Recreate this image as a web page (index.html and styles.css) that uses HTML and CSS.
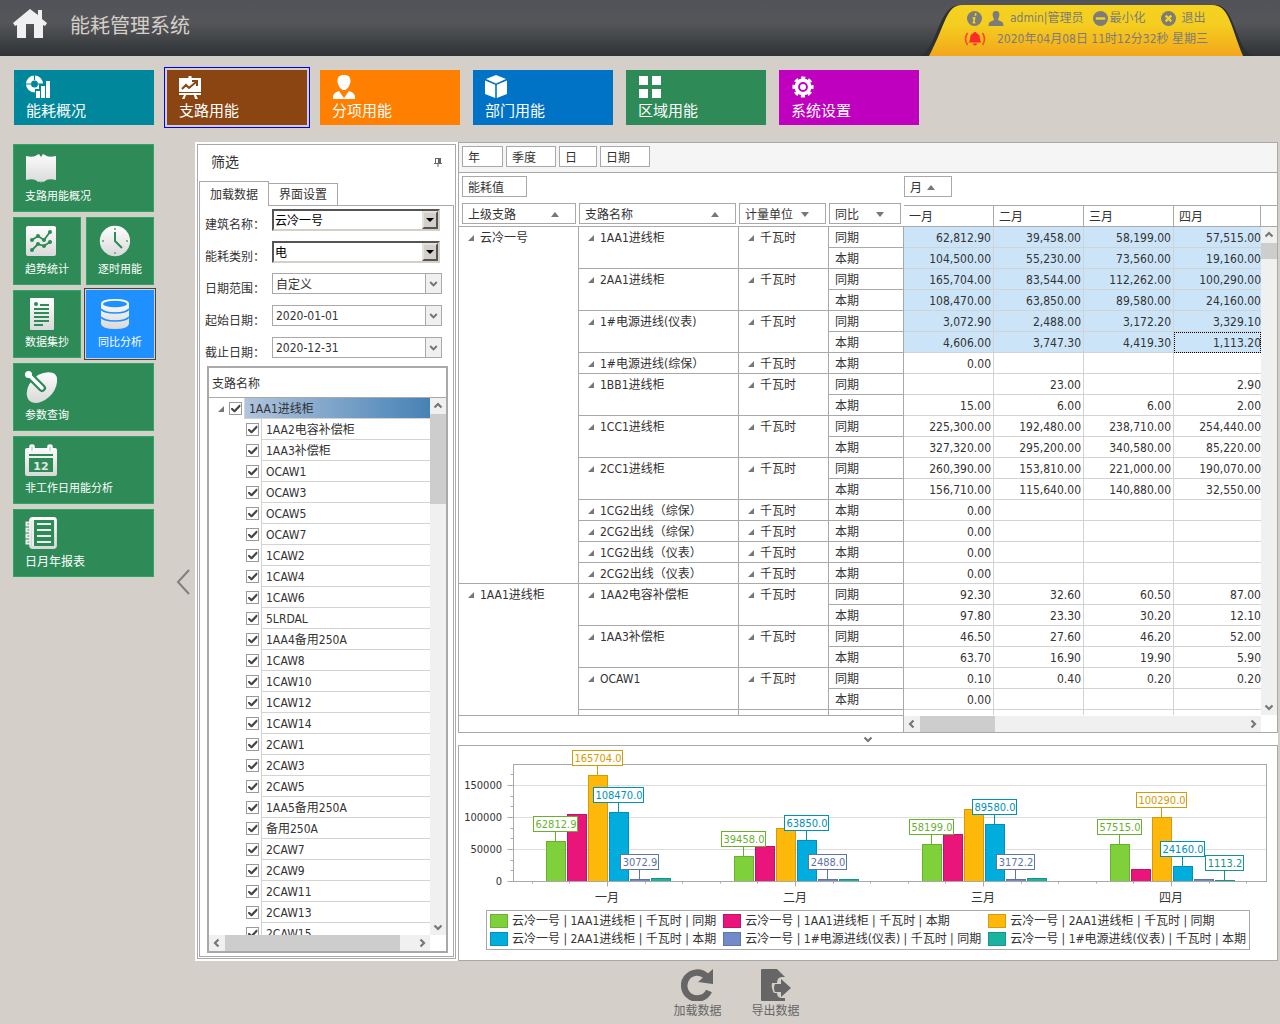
FILE: index.html
```html
<!DOCTYPE html>
<html lang="zh-CN">
<head>
  <meta charset="UTF-8">
  <title>能耗管理系统</title>
  <link rel="stylesheet" href="styles.css">
</head>
<body>
  <svg class="defs" width="0" height="0">
    <defs>
      <linearGradient id="metal" gradientUnits="userSpaceOnUse" x1="0" y1="0" x2="0" y2="32">
        <stop offset="0" stop-color="#ffffff"/>
        <stop offset="1" stop-color="#d8d8d8"/>
      </linearGradient>
      <linearGradient id="gold" x1="0" y1="0" x2="0" y2="1">
        <stop offset="0" stop-color="#f4d31f"/>
        <stop offset="0.4" stop-color="#f4cd20"/>
        <stop offset="1" stop-color="#f3a61b"/>
      </linearGradient>
      <symbol id="chev" viewBox="0 0 16 16">
        <path d="M4.5 6.5 8 10l3.500-3.500" fill="none" stroke="#777" stroke-width="2.200"/>
      </symbol>
    </defs>
  </svg>

  <header class="topbar">
    <svg class="home" width="36" height="32" viewBox="0 0 36 32">
      <path d="M18 1 1 15l2 3 2-1v13h9V16h8v14h9V17l2 1 2-3-5-4V2h-4v5z" fill="#f0f0f0"/>
    </svg>
    <h1>能耗管理系统</h1>
    <div class="user-tab">
      <svg class="tab-shape" width="348" height="56" viewBox="0 0 348 56">
        <path d="M8 56C26 48 26 5 48 5h256c20 0 20 51 40 51z" fill="#2c3032"/>
        <path d="M17 56C34 24 34 5 50 5h250C317 5 318 24 331 56z" fill="url(#gold)"/>
      </svg>
      <div class="user-row">
        <svg width="15" height="15" viewBox="0 0 16 16"><circle cx="8" cy="8" r="8" fill="#7d7c78"/><path d="M9.500 2.500 8.800 5M8.300 6.500 7 12.500M6 7.500h2M6 12.500h3" stroke="#f4d31f" stroke-width="1.800"/></svg>
        <svg width="16" height="15" viewBox="0 0 16 16"><path d="M8 0c3 0 4 2 3.500 5-.3 2-1.300 3-1.300 4.500L15 12q1 1 1 4H0q0-3 1-4l4.800-2.500C5.800 8 4.800 7 4.500 5 4 2 5 0 8 0z" fill="#7d7c78"/></svg>
        <span class="user-name">admin|管理员</span>
        <button type="button"><svg width="15" height="15" viewBox="0 0 16 16"><circle cx="8" cy="8" r="8" fill="#7d7c78"/><path d="M3 8h10" stroke="#f4d31f" stroke-width="2.500"/></svg>最小化</button>
        <button type="button" class="exit"><svg width="15" height="15" viewBox="0 0 16 16"><circle cx="8" cy="8" r="8" fill="#7d7c78"/><path d="m5 5 6 6M11 5l-6 6" stroke="#f4d31f" stroke-width="2.500"/></svg>退出</button>
      </div>
      <div class="clock-row">
        <svg width="24" height="16" viewBox="0 0 24 16"><path d="M12 1q1.500 0 1.500 1.200Q17 3 17 8q0 2 1.500 3.500h-13Q7 10 7 8q0-5 3.500-5.800Q10.500 1 12 1zM10 12.500h4q0 2-2 2t-2-2z" fill="#fb2b2b"/><path d="M4.500 2q-4 6 0 12M19.500 2q4 6 0 12" fill="none" stroke="#fb4a2b" stroke-width="1.600"/></svg>
        <span>2020年04月08日 11时12分32秒 星期三</span>
      </div>
    </div>
  </header>

  <nav class="modules">
    <a href="#" class="module teal">
      <svg width="24" height="24" viewBox="0 0 24 24"><circle cx="8.500" cy="9" r="6" fill="none" stroke="#fff" stroke-width="5"/><path d="M8.500 0v5M0 9h5M12 9h5" stroke="#00879c" stroke-width="1.200"/><path d="M9 14h15v10H9z" fill="#00879c"/><path d="M18 4h7v20h-7zM13 9h6v15h-6z" fill="#00879c"/><path d="M10 16h4v7h-4zM15 11h4v12h-4zM20 6h4v17h-4z" fill="#fff"/></svg>
      <span>能耗概况</span>
    </a>
    <a href="#" class="module brown current">
      <svg width="24" height="24" viewBox="0 0 24 24"><path d="M9.500 1h3v2H22v14H0V3h9.500zM0 18h22v2h-5l2 4h-3l-1-4H7l-1.500 4H3l2-4H0z" fill="#fff"/><path d="m3 14 4-4 3 3 7-6M13 6h5v5" fill="none" stroke="#8b4513" stroke-width="2"/></svg>
      <span>支路用能</span>
    </a>
    <a href="#" class="module orange">
      <svg width="24" height="24" viewBox="0 0 24 24"><path d="M12 0c4.500 0 6.500 2 6.500 6 0 3-2 7-4.500 8.500q-2 1-4 0C7.500 13 5.500 9 5.500 6c0-4 2-6 6.500-6zM7 16l5 7 5-7q7 2 6 8H1q-1-6 6-8z" fill="#fff"/></svg>
      <span>分项用能</span>
    </a>
    <a href="#" class="module blue">
      <svg width="24" height="24" viewBox="0 0 24 24"><path d="M11 0 21 4 11 8.500 1 4zM0 5.500l10.200 4.300V23L0 19zM22 5.500 11.800 9.800V23L22 19z" fill="#fff"/></svg>
      <span>部门用能</span>
    </a>
    <a href="#" class="module green">
      <svg width="24" height="24" viewBox="0 0 24 24"><path d="M1 1h9v9H1zM14 1h9v9h-9zM1 14h9v9H1zM14 14h9v9h-9z" fill="#fff"/></svg>
      <span>区域用能</span>
    </a>
    <a href="#" class="module purple">
      <svg width="24" height="24" viewBox="0 0 24 24"><circle cx="12" cy="12" r="8.800" fill="none" stroke="#fff" stroke-width="3.600" stroke-dasharray="3.910 3" stroke-dashoffset="2"/><circle cx="12" cy="12" r="6.700" fill="none" stroke="#fff" stroke-width="3.600"/><circle cx="12" cy="12" r="3" fill="#fff"/></svg>
      <span>系统设置</span>
    </a>
  </nav>

  <div class="main">
    <nav class="side">
      <a href="#" class="tile wide">
        <svg width="32" height="32" viewBox="0 0 32 32"><path d="M1 4q8 2 11-1l2-1 2 3 2-3 2 1q3 3 11 1v24q-8-2-11 1-2 2-3 0l-1 2-1-2q-1 2-3 0-3-3-11-1z" fill="url(#metal)"/></svg>
        <span>支路用能概况</span>
      </a>
      <a href="#" class="tile">
        <svg width="32" height="32" viewBox="0 0 32 32"><rect x="1" y="1" width="30" height="30" rx="2" fill="url(#metal)"/><path d="m7 15 6-4 6 4 6-8M7 25l6-6 6 2 6-4" fill="none" stroke="#2e8b57" stroke-width="1.800"/><g fill="#2e8b57"><circle cx="7" cy="15" r="2"/><circle cx="13" cy="11" r="2"/><circle cx="19" cy="15" r="2"/><circle cx="25" cy="7" r="2"/><circle cx="7" cy="25" r="2"/><circle cx="13" cy="19" r="2"/><circle cx="19" cy="21" r="2"/><circle cx="25" cy="17" r="2"/></g></svg>
        <span>趋势统计</span>
      </a>
      <a href="#" class="tile">
        <svg width="32" height="32" viewBox="0 0 32 32"><circle cx="17" cy="16" r="15.200" fill="url(#metal)"/><path d="M17 7v9l7 7" fill="none" stroke="#2e8b57" stroke-width="2"/><path d="M16 3h2v2h-2zM16 27h2v2h-2zM4 15h2v2H4zM28 15h2v2h-2z" fill="#7cb596"/></svg>
        <span>逐时用能</span>
      </a>
      <a href="#" class="tile">
        <svg width="32" height="32" viewBox="0 0 32 32"><path d="M6 0h22q1 0 1 1v30q0 1-1 1H6q-1 0-1-1V1q0-1 1-1z" fill="url(#metal)"/><circle cx="11" cy="6" r="2" fill="#2e8b57"/><path d="M15 7h9M9 11h15M9 15h15M9 19h15M9 23h15M9 27h9" stroke="#2e8b57" stroke-width="1.800"/></svg>
        <span>数据集抄</span>
      </a>
      <a href="#" class="tile selected">
        <svg width="32" height="32" viewBox="0 0 32 32"><path d="M3 6v20q1 5 14 5t14-5V6q0-5-14-5T3 6z" fill="url(#metal)"/><ellipse cx="17" cy="6" rx="12" ry="3.200" fill="#1e90ff"/><path d="M3 11q3 4 14 4t14-4M3 19q3 4 14 4t14-4" fill="none" stroke="#1e90ff" stroke-width="1.500"/></svg>
        <span>同比分析</span>
      </a>
      <a href="#" class="tile wide">
        <svg width="32" height="32" viewBox="0 0 32 32"><path d="M13 4q8-4 15-2 5 2 4 9-1 9-8 15-7 6-14 6-7-1-8-7-2-11 11-21z" fill="url(#metal)"/><path d="m4 4 13 13" stroke="#2e8b57" stroke-width="8" stroke-linecap="round"/><path d="m4 4 13 13" stroke="#fff" stroke-width="3.500" stroke-linecap="round"/><circle cx="3.500" cy="3.500" r="3.500" fill="#fff"/></svg>
        <span>参数查询</span>
      </a>
      <a href="#" class="tile wide">
        <svg width="32" height="32" viewBox="0 0 32 32"><path d="M2 4h28q2 0 2 2v24q0 2-2 2H2q-2 0-2-2V6q0-2 2-2z" fill="url(#metal)"/><path d="M4 10h24v2H4zM4 14h24v14H4z" fill="#2e8b57"/><path d="M5.500 7V2.500q0-1 1.500-1t1.500 1V7M23.500 7V2.500q0-1 1.500-1t1.500 1V7" stroke="#fff" stroke-width="2.500" fill="#2e8b57"/><text x="16" y="26" text-anchor="middle" class="cal-day">12</text></svg>
        <span>非工作日用能分析</span>
      </a>
      <a href="#" class="tile wide">
        <svg width="32" height="32" viewBox="0 0 32 32"><rect x="5.500" y="1.500" width="25" height="29" rx="2" fill="none" stroke="url(#metal)" stroke-width="2.800"/><path d="M8 3v26" stroke="#eee" stroke-width="2"/><path d="M12 7h14M12 13h14M12 19h14M12 25h14" stroke="#eee" stroke-width="2"/><path d="M6 5.500H1.500v3H6M6 11.500H1.500v3H6M6 17.500H1.500v3H6M6 23.500H1.500v3H6" fill="none" stroke="#eee" stroke-width="2"/></svg>
        <span class="big">日月年报表</span>
      </a>
    </nav>
    <button type="button" class="collapse" aria-label="收起">
      <svg width="14" height="26" viewBox="0 0 14 26"><path d="M13 1 2 13l11 12" fill="none" stroke="#808080" stroke-width="2"/></svg>
    </button>

    <div class="workspace">
      <section class="filter">
        <div class="filter-head">
          <h2>筛选</h2>
          <svg width="8" height="9" viewBox="0 0 8 9"><path d="M1 0h6v5h1v1H4.500v3h-1V6H0V5h1z" fill="#666"/><path d="M2 1h2v4H2z" fill="#fff"/></svg>
        </div>
        <div class="tabs">
          <button type="button" class="tab active">加载数据</button>
          <button type="button" class="tab">界面设置</button>
        </div>
        <div class="tab-page">
          <form class="fields">
            <label for="building">建筑名称：</label>
            <div class="combo classic"><select id="building"><option>云冷一号</option></select></div>
            <label for="kind">能耗类别：</label>
            <div class="combo classic"><select id="kind"><option>电</option></select></div>
            <label for="range">日期范围：</label>
            <div class="combo"><select id="range"><option>自定义</option></select><svg class="arrow"><use href="#chev"/></svg></div>
            <label for="from">起始日期：</label>
            <div class="combo"><input id="from" type="text" value="2020-01-01"><svg class="arrow"><use href="#chev"/></svg></div>
            <label for="to">截止日期：</label>
            <div class="combo"><input id="to" type="text" value="2020-12-31"><svg class="arrow"><use href="#chev"/></svg></div>
          </form>
          <div class="tree">
            <div class="tree-head">支路名称</div>
            <div class="tree-view">
              <ul id="tree" class="tree-list"></ul>
              <div class="scroll-v">
                <svg class="up"><use href="#chev"/></svg>
                <div class="thumb tall"></div>
                <svg class="down"><use href="#chev"/></svg>
              </div>
            </div>
            <div class="tree-bottom">
              <div class="scroll-h">
                <svg class="left"><use href="#chev"/></svg>
                <div class="thumb long"></div>
                <svg class="right"><use href="#chev"/></svg>
              </div>
            </div>
          </div>
        </div>
      </section>

      <div class="content">
        <section class="pivot">
          <div class="pivot-filter">
            <button type="button" class="chip">年</button>
            <button type="button" class="chip w50">季度</button>
            <button type="button" class="chip w38">日</button>
            <button type="button" class="chip w50">日期</button>
          </div>
          <div class="pivot-view">
            <div class="pivot-clip">
              <table class="grid">
                <colgroup>
                  <col class="c-parent"><col class="c-name"><col class="c-unit"><col class="c-kind">
                  <col class="c-num"><col class="c-num"><col class="c-num"><col>
                </colgroup>
                <thead>
                  <tr class="areas">
                    <td colspan="4"><button type="button" class="chip w65">能耗值</button></td>
                    <td colspan="4" class="col-area"><button type="button" class="chip w48">月<i class="asc"></i></button></td>
                  </tr>
                  <tr class="heads">
                    <th><button type="button" class="chip fill">上级支路<i class="asc"></i></button></th>
                    <th><button type="button" class="chip fill">支路名称<i class="asc"></i></button></th>
                    <th><button type="button" class="chip fill">计量单位<i class="desc"></i></button></th>
                    <th><button type="button" class="chip fill">同比<i class="desc"></i></button></th>
                    <th class="month"><div>一月</div></th>
                    <th class="month"><div>二月</div></th>
                    <th class="month"><div>三月</div></th>
                    <th class="month"><div>四月</div></th>
                  </tr>
                </thead>
                <tbody id="rows"></tbody>
              </table>
            </div>
            <div class="pivot-side">
              <div class="side-head"><div></div></div>
              <div class="scroll-v">
                <svg class="up"><use href="#chev"/></svg>
                <div class="thumb"></div>
                <svg class="down"><use href="#chev"/></svg>
              </div>
            </div>
          </div>
          <div class="pivot-bottom">
            <div class="pivot-corner"></div>
            <div class="scroll-h">
              <svg class="left"><use href="#chev"/></svg>
              <div class="thumb"></div>
              <svg class="right"><use href="#chev"/></svg>
            </div>
          </div>
        </section>
        <div class="splitter"><svg width="16" height="12"><use href="#chev" y="-2" width="16" height="16"/></svg></div>
        <section class="chart-box">
          <svg id="chart" class="chart"></svg>
          <ul id="legend" class="legend"></ul>
        </section>
      </div>
    </div>
  </div>

  <footer class="actions">
    <button type="button">
      <svg width="32" height="32" viewBox="0 0 32 32"><path d="M28 22A13 13 0 1 1 25 7" fill="none" stroke="#666" stroke-width="6.500"/><path d="M32 0v15l-15-2z" fill="#666"/></svg>
      加载数据
    </button>
    <button type="button">
      <svg width="32" height="32" viewBox="0 0 32 32"><path d="M2 0h15l8 8v24H2q-1 0-1-1V1q0-1 1-1z" fill="#666"/><path d="M12 14h5q0-6 5-6h3l7 11-7 10h-3q-5 0-5-5h-3q-3-5-2-10z" fill="#d4cfc8"/><path d="M15 15h6v-5l10 9-10 9v-5h-6q-2-4 0-8z" fill="#666"/></svg>
      导出数据
    </button>
  </footer>

  <script src="script.js"></script>
</body>
</html>
```

FILE: styles.css
```css
*, *::before, *::after {
  box-sizing: border-box;
}

body {
  margin: 0;
  height: 100vh;
  display: flex;
  flex-direction: column;
  background: #d4cfc8;
  color: #333;
  font-family: "DejaVu Sans Condensed", "Noto Sans CJK SC", sans-serif;
  font-size: 12px;
  line-height: 20px;
}

h1, h2, ul {
  margin: 0;
  padding: 0;
  font-weight: normal;
  list-style: none;
}

button, input, select {
  font: inherit;
  color: inherit;
}

button {
  padding: 0;
  border: 0;
  background: none;
}

a {
  color: inherit;
  text-decoration: none;
}

svg {
  display: block;
  flex: none;
}

.defs {
  position: absolute;
}

/* Top bar */
.topbar {
  height: 56px;
  flex: none;
  display: flex;
  padding-left: 12px;
  background: linear-gradient(#525358, #55565a 40%, #2f3335);
}

.home {
  margin-top: 8px;
}

.topbar h1 {
  margin-left: 22px;
  font-size: 20px;
  line-height: 52px;
  color: #d4cfc8;
}

.user-tab {
  position: relative;
  width: 348px;
  margin-left: auto;
  margin-right: 20px;
  padding: 8px 0 0 55px;
  color: #7d7c78;
}

.tab-shape {
  position: absolute;
  left: 0;
  top: 0;
}

.user-row, .clock-row {
  position: relative;
  display: flex;
  align-items: center;
  gap: 6px;
  white-space: nowrap;
}

.user-row button {
  display: flex;
  align-items: center;
  gap: 1px;
  margin-left: 4px;
}

.user-row .exit {
  margin-left: 9px;
  gap: 6px;
}

.clock-row {
  margin-left: -4px;
  padding-top: 1px;
  gap: 10px;
}

/* Module tiles */
.modules {
  flex: none;
  display: flex;
  gap: 13px;
  padding: 14px 14px 17px;
}

.module {
  width: 140px;
  height: 55px;
  padding: 5px 12px 0;
  color: #fff;
  font-size: 15px;
}

.module span {
  display: block;
  line-height: 24px;
}

.teal { background: #00879c; }
.brown { background: #8b4513; }
.orange { background: #ff8000; }
.blue { background: #0073c6; }
.green { background: #2e8b57; }
.purple { background: #bf00bf; }

.module.current {
  outline: 1px solid #0000ff;
  outline-offset: 2px;
}

.main {
  flex: 1;
  min-height: 0;
  display: flex;
}

/* Side tiles */
.side {
  flex: none;
  display: grid;
  grid-template-columns: 68px 68px;
  grid-auto-rows: 68px;
  gap: 5px;
  padding: 2px 0 0 13px;
}

.tile {
  padding: 7px 0 0 11px;
  border: 1px solid #2ca764;
  background: #2e8b57;
  color: #fff;
  font-size: 11px;
  white-space: nowrap;
}

.tile span {
  display: block;
  margin-top: 3px;
}

.tile .big {
  font-size: 12px;
}

.tile.wide {
  grid-column: span 2;
}

.tile.selected {
  background: #1e90ff;
  border-color: #1e90ff;
  outline: 1px solid #444;
  outline-offset: 1px;
}

.cal-day {
  font: bold 11px "DejaVu Sans", sans-serif;
  fill: #e6e6e6;
}

.collapse {
  width: 41px;
  padding: 60px 0 0 22px;
}

/* Workspace */
.workspace {
  flex: 1;
  min-width: 0;
  display: flex;
  gap: 2px;
  padding-left: 2px;
  margin-right: 2px;
  background: #fff;
}

.filter {
  width: 259px;
  margin: 2px 0;
  padding: 1px;
  border: 1px solid #a9a9a9;
  display: flex;
  flex-direction: column;
}

.filter-head {
  display: flex;
  align-items: center;
  justify-content: space-between;
  height: 35px;
  padding: 0 12px 3px;
}

.filter-head h2 {
  font-size: 14px;
}

.tabs {
  display: flex;
  align-items: flex-end;
}

.tab {
  height: 22px;
  padding: 1px 10px 0;
  border: 1px solid #a9a9a9;
  border-width: 1px 1px 0 0;
}

.tab.active {
  position: relative;
  height: 25px;
  margin-bottom: -1px;
  border-left-width: 1px;
  background: #fff;
}

.tab-page {
  flex: 1;
  min-height: 0;
  display: flex;
  flex-direction: column;
  padding: 3px 5px 3px 7px;
  border: 1px solid #a9a9a9;
}

.fields {
  display: grid;
  grid-template-columns: 65px 170px;
  row-gap: 10px;
  padding-bottom: 7px;
}

.fields label {
  height: 22px;
  padding-top: 6px;
  margin-left: -2px;
  white-space: nowrap;
}

.combo {
  position: relative;
  height: 21px;
  border: 1px solid #a9a9a9;
  display: flex;
}

.combo select, .combo input {
  flex: 1;
  min-width: 0;
  padding: 1px 3px 0;
  border: 0;
  outline: 0;
  background: #fff;
  appearance: none;
}

.arrow {
  width: 16px;
  height: 19px;
  border-left: 1px solid #a9a9a9;
  background: #f0f0f0;
}

.combo.classic {
  margin-right: 2px;
  height: 22px;
  border: 2px solid;
  border-color: #555 #d4cfc8 #d4cfc8 #555;
  color: #000;
}

.classic select {
  padding: 0 1px;
}

.classic::before {
  content: "";
  position: absolute;
  right: 0;
  top: 0;
  width: 16px;
  height: 18px;
  border: 2px solid;
  border-color: #e4e0da #555 #555 #e4e0da;
  background: #d4cfc8;
  pointer-events: none;
}

.classic::after {
  content: "";
  position: absolute;
  right: 4px;
  top: 7px;
  border: 4px solid transparent;
  border-top-color: #000;
  border-bottom: 0;
  pointer-events: none;
}

/* Circuit tree */
.tree {
  flex: 1;
  min-height: 0;
  display: flex;
  flex-direction: column;
  border: 2px solid #a9a9a9;
}

.tree-head {
  height: 30px;
  padding-left: 3px;
  border-bottom: 1px solid #a9a9a9;
  line-height: 32px;
}

.tree-view {
  flex: 1;
  min-height: 0;
  display: flex;
}

.tree-list {
  flex: 1;
  overflow: hidden;
}

.tree-list li {
  display: flex;
  align-items: center;
  height: 21px;
  padding-left: 37px;
}

.tree-list li.root {
  padding-left: 7px;
}

.tree-list label {
  flex: 1;
  height: 21px;
  margin-left: 2px;
  padding-left: 4px;
  border-left: 1px solid #d3d3d3;
  border-bottom: 1px solid #d3d3d3;
  line-height: 22px;
}

.tree-list .root label {
  background: linear-gradient(to right, #b0c4de, #4682b4);
}

.tree-list input {
  appearance: none;
  width: 13px;
  height: 13px;
  margin: 0;
  border: 1px solid #999;
  background: #fff;
}

.tree-list .root input {
  margin-left: 5px;
}

.tree-list input:checked::before {
  content: "";
  display: block;
  width: 11px;
  height: 11px;
  background: #444;
  clip-path: polygon(10% 46%, 24% 46%, 40% 62%, 84% 16%, 94% 16%, 94% 34%, 46% 84%, 36% 84%, 10% 60%);
}

.tree-bottom {
  height: 16px;
  padding-right: 16px;
}

/* Scroll bars */
.scroll-v, .scroll-h {
  display: flex;
  background: #f0f0f0;
}

.scroll-v {
  width: 16px;
  flex-direction: column;
}

.scroll-h {
  flex: 1;
  height: 16px;
}

.scroll-v svg, .scroll-h svg {
  width: 16px;
  height: 16px;
}

.thumb {
  width: 16px;
  height: 16px;
  background: #cdcdcd;
}

.scroll-h .thumb {
  width: 75px;
}

.scroll-v .tall {
  height: 90px;
}

.scroll-h .long {
  width: 175px;
}

.up { transform: rotate(180deg); }
.left { transform: rotate(90deg); }
.right { transform: rotate(-90deg); margin-left: auto; }
.down { margin-top: auto; }

/* Pivot grid */
.content {
  flex: 1;
  min-width: 0;
  display: flex;
  flex-direction: column;
}

.pivot {
  flex: 1;
  min-height: 0;
  display: flex;
  flex-direction: column;
  border: 1px solid #a9a9a9;
}

.pivot-filter {
  flex: none;
  display: flex;
  gap: 3px;
  height: 30px;
  padding: 3px;
  border-bottom: 1px solid #a9a9a9;
  background: #f5f5f5;
}

.chip {
  display: flex;
  align-items: center;
  justify-content: space-between;
  width: 41px;
  height: 21px;
  padding: 2px 16px 0 5px;
  border: 1px solid #a9a9a9;
  background: #fff;
  white-space: nowrap;
}

.w38 { width: 38px; }
.w48 { width: 48px; }
.w50 { width: 50px; }
.w65 { width: 65px; }
.chip.fill { width: 100%; }

.asc, .desc {
  border: 4px solid transparent;
}

.asc {
  border-top: 0;
  border-bottom: 5px solid #777;
}

.desc {
  border-bottom: 0;
  border-top: 5px solid #777;
}

.pivot-view {
  flex: 1;
  min-height: 0;
  display: flex;
}

.pivot-clip {
  flex: 1;
  min-width: 0;
  overflow: hidden;
}

.grid {
  width: 100%;
  table-layout: fixed;
  border-collapse: separate;
  border-spacing: 0;
}

.c-parent { width: 120px; }
.c-name { width: 160px; }
.c-unit { width: 90px; }
.c-kind { width: 75px; }
.c-num { width: 90px; }

.grid th, .grid td {
  padding: 0;
  font-weight: normal;
  text-align: left;
  vertical-align: top;
}

.grid .areas td {
  height: 30px;
  padding: 3px 3px 0;
}

.grid .areas .col-area {
  padding-left: 0;
}

.grid .heads th {
  height: 24px;
  padding: 0 3px 0 0;
  border-bottom: 1px solid #a9a9a9;
}

.grid .heads th:first-child {
  padding-left: 3px;
}

.grid .heads .month {
  padding: 2px 0 0;
}

.month div {
  height: 21px;
  padding-left: 5px;
  border: 1px solid #a9a9a9;
  border-width: 1px 1px 0 0;
  line-height: 23px;
}

.grid .head, .grid .kind {
  height: 21px;
  padding: 2px 0 0 21px;
  border-right: 1px solid #a9a9a9;
  border-bottom: 1px solid #a9a9a9;
  line-height: 18px;
}

.grid .kind {
  padding-left: 6px;
}

.expand {
  float: left;
  margin: 6px 6px 0 -12px;
  border-left: 6px solid transparent;
  border-bottom: 6px solid #777;
}

.root .expand {
  margin: 0 0 0 2px;
}

.grid .num {
  height: 21px;
  padding: 2px 2px 0 0;
  border-right: 1px solid #d3d3d3;
  border-bottom: 1px solid #d3d3d3;
  line-height: 18px;
  text-align: right;
}

.grid .num:last-child {
  padding-right: 0;
  border-right: 0;
}

.grid .picked {
  background: #cce4f7;
}

.grid .focused {
  outline: 1px dotted #000;
  outline-offset: -1px;
}

.pivot-side {
  display: flex;
  flex-direction: column;
}

.pivot-side .scroll-v {
  flex: 1;
}

.side-head {
  height: 54px;
  padding-top: 32px;
  border-bottom: 1px solid #a9a9a9;
}

.side-head div {
  border-top: 1px solid #a9a9a9;
}

.pivot-bottom {
  height: 17px;
  display: flex;
  align-items: flex-end;
  padding-right: 16px;
}

.pivot-corner {
  width: 445px;
  height: 17px;
  border: 1px solid #a9a9a9;
  border-width: 1px 1px 0 0;
}

.splitter {
  flex: none;
  height: 12px;
  display: flex;
  justify-content: center;
}

/* Chart */
.chart-box {
  flex: none;
  height: 216px;
  border: 1px solid #a9a9a9;
}

.chart {
  width: 100%;
  height: 164px;
}

.chart text {
  fill: #333;
  text-anchor: middle;
}

.chart .axis-num, .chart .mark {
  font-size: 11px;
}

.chart .axis-num {
  text-anchor: end;
}

.legend {
  display: grid;
  grid-template-columns: repeat(3, auto);
  column-gap: 7px;
  width: max-content;
  margin: 0 auto;
  padding: 1px 3px;
  border: 1px solid #a9a9a9;
}

.legend li {
  display: flex;
  align-items: center;
  gap: 4px;
  height: 18px;
}

.legend i {
  width: 18px;
  height: 14px;
  border: 1px solid rgba(0, 0, 0, 0.15);
}

/* Bottom actions */
.actions {
  flex: none;
  display: flex;
  justify-content: center;
  gap: 30px;
  height: 63px;
  padding: 8px 2px 0 195px;
}

.actions button {
  display: flex;
  flex-direction: column;
  align-items: center;
  justify-content: flex-start;
  height: 52px;
  color: #666;
}
```

FILE: script.js
```js
// circuit tree
const circuits = ['1AA2电容补偿柜', '1AA3补偿柜', 'OCAW1', 'OCAW3', 'OCAW5', 'OCAW7',
  '1CAW2', '1CAW4', '1CAW6', '5LRDAL', '1AA4备用250A', '1CAW8', '1CAW10', '1CAW12',
  '1CAW14', '2CAW1', '2CAW3', '2CAW5', '1AA5备用250A', '备用250A', '2CAW7', '2CAW9',
  '2CAW11', '2CAW13', '2CAW15'];

let tree = '<li class="root"><i class="expand"></i><input type="checkbox" id="n0" checked><label for="n0">1AA1进线柜</label></li>';
circuits.forEach((name, i) => {
  tree += `<li><input type="checkbox" id="n${i + 1}" checked><label for="n${i + 1}">${name}</label></li>`;
});
document.getElementById('tree').innerHTML = tree;

// pivot rows: last = same period of last year, now = current period
const last = '同期', now = '本期';
const groups = [
  ['云冷一号', [
    ['1AA1进线柜', [[last, '62,812.90', '39,458.00', '58,199.00', '57,515.00'], [now, '104,500.00', '55,230.00', '73,560.00', '19,160.00']]],
    ['2AA1进线柜', [[last, '165,704.00', '83,544.00', '112,262.00', '100,290.00'], [now, '108,470.00', '63,850.00', '89,580.00', '24,160.00']]],
    ['1#电源进线(仪表)', [[last, '3,072.90', '2,488.00', '3,172.20', '3,329.10'], [now, '4,606.00', '3,747.30', '4,419.30', '1,113.20']]],
    ['1#电源进线(综保）', [[now, '0.00', '', '', '']]],
    ['1BB1进线柜', [[last, '', '23.00', '', '2.90'], [now, '15.00', '6.00', '6.00', '2.00']]],
    ['1CC1进线柜', [[last, '225,300.00', '192,480.00', '238,710.00', '254,440.00'], [now, '327,320.00', '295,200.00', '340,580.00', '85,220.00']]],
    ['2CC1进线柜', [[last, '260,390.00', '153,810.00', '221,000.00', '190,070.00'], [now, '156,710.00', '115,640.00', '140,880.00', '32,550.00']]],
    ['1CG2出线（综保）', [[now, '0.00', '', '', '']]],
    ['2CG2出线（综保）', [[now, '0.00', '', '', '']]],
    ['1CG2出线（仪表）', [[now, '0.00', '', '', '']]],
    ['2CG2出线（仪表）', [[now, '0.00', '', '', '']]]
  ]],
  ['1AA1进线柜', [
    ['1AA2电容补偿柜', [[last, '92.30', '32.60', '60.50', '87.00'], [now, '97.80', '23.30', '30.20', '12.10']]],
    ['1AA3补偿柜', [[last, '46.50', '27.60', '46.20', '52.00'], [now, '63.70', '16.90', '19.90', '5.90']]],
    ['OCAW1', [[last, '0.10', '0.40', '0.20', '0.20'], [now, '0.00', '', '', '']]],
    ['', [['', '', '', '', '']]]
  ]]
];

let html = '';
let line = 0;
groups.forEach(([parent, items]) => {
  const total = items.reduce((n, item) => n + item[1].length, 0);
  items.forEach(([name, rows], i) => {
    rows.forEach((row, j) => {
      html += '<tr>';
      if (i === 0 && j === 0) html += `<th class="head" rowspan="${total}"><i class="expand"></i>${parent}</th>`;
      if (j === 0) {
        const mark = name ? '<i class="expand"></i>' : '';
        html += `<th class="head" rowspan="${rows.length}">${mark}${name}</th>`;
        html += `<th class="head" rowspan="${rows.length}">${mark}${name ? '千瓦时' : ''}</th>`;
      }
      html += `<th class="kind">${row[0]}</th>`;
      row.slice(1).forEach((value, k) => {
        const picked = line < 6 ? ' picked' : '';
        const focused = line === 5 && k === 3 ? ' focused' : '';
        html += `<td class="num${picked}${focused}">${value}</td>`;
      });
      html += '</tr>';
      line++;
    });
  });
});
document.getElementById('rows').innerHTML = html;

// chart
const series = [
  { name: '云冷一号 | 1AA1进线柜 | 千瓦时 | 同期', fill: '#7fd13b', edge: '#6ab02f', data: [62812.9, 39458, 58199, 57515], marks: [0, 1, 2, 3] },
  { name: '云冷一号 | 1AA1进线柜 | 千瓦时 | 本期', fill: '#ea157a', edge: '#c31266', data: [104500, 55230, 73560, 19160], marks: [] },
  { name: '云冷一号 | 2AA1进线柜 | 千瓦时 | 同期', fill: '#feb80a', edge: '#d59a08', data: [165704, 83544, 112262, 100290], marks: [0, 3] },
  { name: '云冷一号 | 2AA1进线柜 | 千瓦时 | 本期', fill: '#00addc', edge: '#0091b8', data: [108470, 63850, 89580, 24160], marks: [0, 1, 2, 3] },
  { name: '云冷一号 | 1#电源进线(仪表) | 千瓦时 | 同期', fill: '#738ac8', edge: '#6073a7', data: [3072.9, 2488, 3172.2, 3329.1], marks: [0, 1, 2] },
  { name: '云冷一号 | 1#电源进线(仪表) | 千瓦时 | 本期', fill: '#1ab39f', edge: '#169585', data: [4606, 3747.3, 4419.3, 1113.2], marks: [3] }
];
const months = ['一月', '二月', '三月', '四月'];

function drawChart() {
  const svg = document.getElementById('chart');
  const left = 54, top = 18, base = 135;
  const right = svg.clientWidth - 11;
  const step = (right - left) / months.length;
  const y = v => Math.round(base - v * 32 / 50000);
  const rule = (x1, y1, x2, y2, color) =>
    `<line x1="${x1 + 0.5}" y1="${y1 + 0.5}" x2="${x2 + 0.5}" y2="${y2 + 0.5}" stroke="${color}"/>`;
  let bars = '', marks = '', axes = '';

  for (let i = 0; i < 11; i++) {
    const major = i % 3 === 0;
    const ty = y(i * 50000 / 3);
    axes += rule(left - (major ? 6 : 3), ty, left, ty, '#a9a9a9');
    if (major) {
      if (i) axes += rule(left, ty, right, ty, '#dedede');
      axes += `<text class="axis-num" x="${left - 11}" y="${ty + 4}">${i * 50000 / 3}</text>`;
    }
  }
  months.forEach((month, m) => {
    const mid = Math.floor(left + step * (m + 0.5));
    for (let t = -2; t < 3; t++) {
      const tx = Math.round(mid + t * step / 5);
      axes += rule(tx, base, tx, base + (t ? 2 : 5), '#a9a9a9');
    }
    axes += `<text x="${mid}" y="${base + 21}">${month}</text>`;
    series.forEach((s, i) => {
      const x = mid - 61 + i * 21;
      const by = y(s.data[m]);
      bars += `<rect x="${x + 0.5}" y="${by + 0.5}" width="19" height="${base - by}" fill="${s.fill}" stroke="${s.edge}"/>`;
      if (s.marks.includes(m)) {
        const text = s.data[m].toFixed(1);
        const w = text.length * 6 + 2;
        const cx = x + 9;
        marks += rule(cx, by - 10, cx, by, s.edge);
        marks += `<rect x="${cx - w / 2 + 0.5}" y="${by - 24.5}" width="${w}" height="15" fill="#fff" stroke="${s.edge}"/>`;
        marks += `<text class="mark" x="${cx + 1}" y="${by - 13}" style="fill:${s.edge}">${text}</text>`;
      }
    });
  });
  const frame = `<rect x="${left + 0.5}" y="${top + 0.5}" width="${right - left}" height="${base - top}" fill="none" stroke="#a9a9a9"/>`;
  svg.innerHTML = axes + frame + bars + rule(left, base, right, base, '#a9a9a9') + marks;
}

document.getElementById('legend').innerHTML = series
  .map(s => `<li><i style="background:${s.fill}"></i>${s.name}</li>`).join('');
drawChart();
window.addEventListener('resize', drawChart);
```
